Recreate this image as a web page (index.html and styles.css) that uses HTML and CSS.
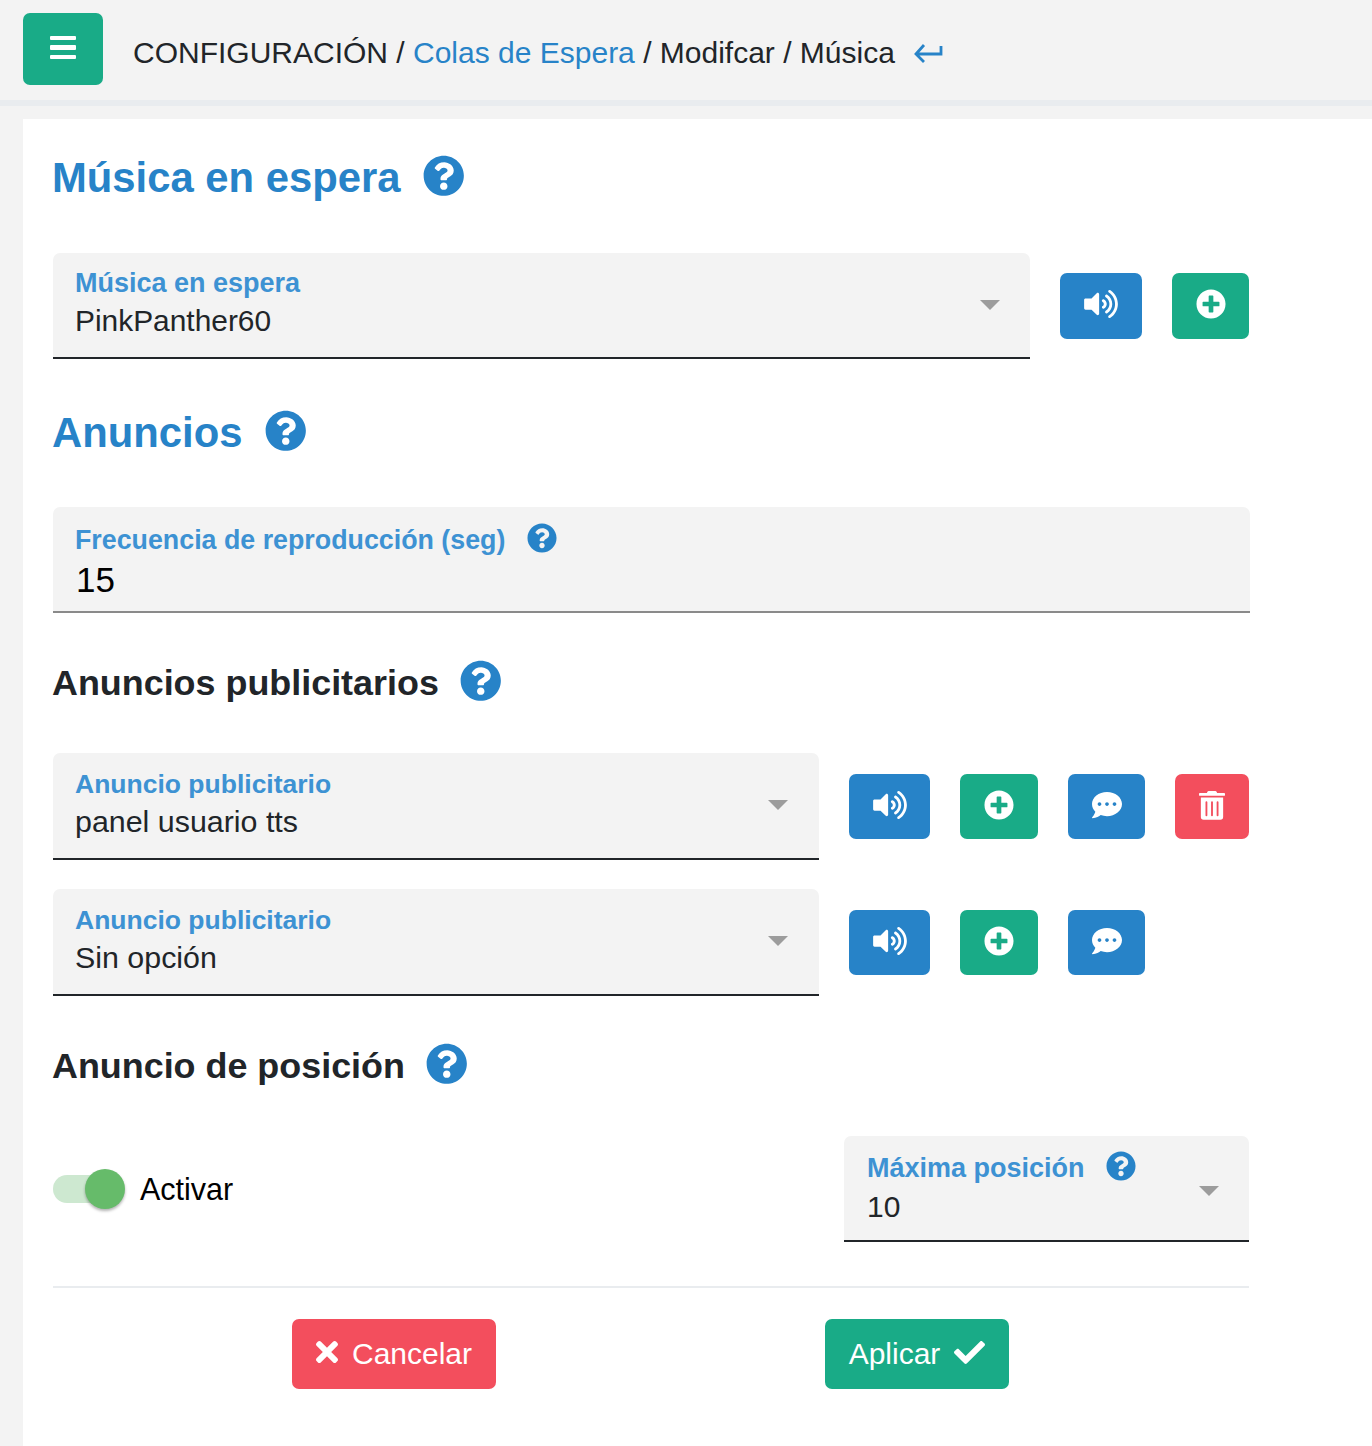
FILE: index.html
```html
<!DOCTYPE html>
<html lang="es">
<head>
<meta charset="utf-8">
<title>Música</title>
<link rel="stylesheet" href="styles.css">
</head>
<body>
<svg class="defs" width="0" height="0" aria-hidden="true">
  <symbol id="q" viewBox="0 0 512 512"><path d="M504 256c0 136.997-111.043 248-248 248S8 392.997 8 256C8 119.083 119.043 8 256 8s248 111.083 248 248zM262.655 90c-54.497 0-89.255 22.957-116.549 63.758-3.536 5.286-2.353 12.415 2.715 16.258l34.699 26.31c5.205 3.947 12.621 3.008 16.665-2.122 17.864-22.658 30.113-35.797 57.303-35.797 20.429 0 45.698 13.148 45.698 32.958 0 14.976-12.363 22.667-32.534 33.976C247.128 238.528 216 254.941 216 296v4c0 6.627 5.373 12 12 12h56c6.627 0 12-5.373 12-12v-1.333c0-28.462 83.186-29.647 83.186-106.667 0-58.002-60.165-102-116.531-102zM256 338c-25.365 0-46 20.635-46 46 0 25.364 20.635 46 46 46s46-20.636 46-46c0-25.365-20.635-46-46-46z"/></symbol>
  <symbol id="plus" viewBox="0 0 512 512"><path d="M256 8C119 8 8 119 8 256s111 248 248 248 248-111 248-248S393 8 256 8zm144 276c0 6.6-5.4 12-12 12h-92v92c0 6.6-5.4 12-12 12h-56c-6.6 0-12-5.4-12-12v-92h-92c-6.6 0-12-5.4-12-12v-56c0-6.6 5.4-12 12-12h92v-92c0-6.6 5.4-12 12-12h56c6.6 0 12 5.4 12 12v92h92c6.6 0 12 5.4 12 12v56z"/></symbol>
  <symbol id="vol" viewBox="0 0 576 512"><path d="M215.03 71.05L126.06 160H24c-13.26 0-24 10.74-24 24v144c0 13.25 10.74 24 24 24h102.06l88.97 88.95c15.03 15.03 40.97 4.47 40.97-16.97V88.02c0-21.46-25.96-31.98-40.97-16.97zm233.32-51.08c-11.17-7.33-26.18-4.24-33.51 6.95-7.34 11.17-4.22 26.18 6.95 33.51 66.27 43.49 105.82 116.6 105.82 195.58 0 78.98-39.55 152.09-105.82 195.58-11.17 7.32-14.29 22.34-6.95 33.5 7.04 10.71 21.93 14.56 33.51 6.95C528.27 439.58 576 351.33 576 256S528.27 72.43 448.35 19.97zM480 256c0-63.53-32.06-121.94-85.77-156.24-11.19-7.14-26.03-3.82-33.12 7.46s-3.78 26.21 7.41 33.36C408.27 165.97 432 209.11 432 256s-23.73 90.03-63.48 115.42c-11.19 7.14-14.5 22.07-7.41 33.36 6.51 10.36 21.12 15.14 33.12 7.46C447.94 377.94 480 319.54 480 256zm-141.77-76.87c-11.58-6.33-26.19-2.16-32.61 9.45-6.39 11.61-2.16 26.2 9.45 32.61C328.98 228.28 336 241.63 336 256c0 14.38-7.02 27.72-18.92 34.81-11.61 6.41-15.84 21-9.45 32.61 6.43 11.66 21.05 15.8 32.61 9.45 28.23-15.55 45.77-45 45.77-76.88s-17.54-61.32-45.78-76.86z"/></symbol>
  <symbol id="chat" viewBox="0 0 512 512"><path d="M256 32C114.6 32 0 125.1 0 240c0 49.6 21.4 95 57 130.7C44.5 421.1 2.7 466 2.2 466.5c-2.2 2.3-2.8 5.7-1.5 8.7S4.8 480 8 480c66.3 0 116-31.8 140.6-51.4 32.7 12.3 69 19.4 107.4 19.4 141.4 0 256-93.1 256-208S397.4 32 256 32zM128 272c-17.7 0-32-14.3-32-32s14.3-32 32-32 32 14.3 32 32-14.3 32-32 32zm128 0c-17.7 0-32-14.3-32-32s14.3-32 32-32 32 14.3 32 32-14.3 32-32 32zm128 0c-17.7 0-32-14.3-32-32s14.3-32 32-32 32 14.3 32 32-14.3 32-32 32z"/></symbol>
  <symbol id="trash" viewBox="0 0 448 512"><path d="M32 464a48 48 0 0 0 48 48h288a48 48 0 0 0 48-48V128H32zm272-256a16 16 0 0 1 32 0v224a16 16 0 0 1-32 0zm-96 0a16 16 0 0 1 32 0v224a16 16 0 0 1-32 0zm-96 0a16 16 0 0 1 32 0v224a16 16 0 0 1-32 0zM432 48H312l-9.4-18.7A24 24 0 0 0 281.1 16H166.8a23.72 23.72 0 0 0-21.4 13.3L136 48H16A16 16 0 0 0 0 64v24a8 8 0 0 0 8 8h432a8 8 0 0 0 8-8V64a16 16 0 0 0-16-16z"/></symbol>
  <symbol id="times" viewBox="0 0 352 512"><path d="M242.72 256l100.07-100.07c12.28-12.28 12.28-32.19 0-44.48l-22.24-22.24c-12.28-12.28-32.19-12.28-44.48 0L176 189.28 75.93 89.21c-12.28-12.28-32.19-12.28-44.48 0L9.21 111.45c-12.28 12.28-12.28 32.19 0 44.48L109.28 256 9.21 356.07c-12.28 12.28-12.28 32.19 0 44.48l22.24 22.24c12.28 12.28 32.2 12.28 44.48 0L176 322.72l100.07 100.07c12.28 12.28 32.2 12.28 44.48 0l22.24-22.24c12.28-12.28 12.28-32.19 0-44.48L242.72 256z"/></symbol>
  <symbol id="check" viewBox="0 0 512 512"><path d="M173.898 439.404l-166.4-166.4c-9.997-9.997-9.997-26.206 0-36.204l36.203-36.204c9.997-9.998 26.207-9.998 36.204 0L192 312.69 432.095 72.596c9.997-9.997 26.207-9.997 36.204 0l36.203 36.204c9.997 9.997 9.997 26.206 0 36.204l-294.4 294.401c-9.998 9.997-26.207 9.997-36.204-.001z"/></symbol>
</svg>

<header class="topbar">
  <button class="menu-btn" aria-label="menu"><span></span><span></span><span></span></button>
  <nav class="crumbs">CONFIGURACIÓN / <a class="link">Colas de Espera</a> / Modifcar / Música
    <svg class="back" viewBox="0 0 30 22"><path d="M28 5v8H3M11 4l-8 9 8 8" fill="none" stroke="currentColor" stroke-width="2.8"/></svg>
  </nav>
</header>

<main class="card">
  <h2 class="title blue t1">Música en espera <svg class="q q-lg"><use href="#q"/></svg></h2>
  <div class="row r1">
    <div class="field w977"><label>Música en espera</label><div class="val">PinkPanther60</div><i class="caret"></i></div>
    <div class="btns">
      <button class="ib blue-bg w82"><svg class="i-vol"><use href="#vol"/></svg></button>
      <button class="ib green-bg w77"><svg class="i-plus"><use href="#plus"/></svg></button>
    </div>
  </div>

  <h2 class="title blue t2">Anuncios <svg class="q q-lg"><use href="#q"/></svg></h2>
  <div class="field input"><label>Frecuencia de reproducción (seg) <svg class="q q-sm"><use href="#q"/></svg></label><div class="val big">15</div></div>

  <h3 class="title sub t3">Anuncios publicitarios <svg class="q q-lg"><use href="#q"/></svg></h3>
  <div class="row r3">
    <div class="field w766"><label>Anuncio publicitario</label><div class="val">panel usuario tts</div><i class="caret"></i></div>
    <div class="btns">
      <button class="ib blue-bg w81"><svg class="i-vol"><use href="#vol"/></svg></button>
      <button class="ib green-bg w78"><svg class="i-plus"><use href="#plus"/></svg></button>
      <button class="ib blue-bg w77"><svg class="i-chat"><use href="#chat"/></svg></button>
      <button class="ib red-bg w74"><svg class="i-trash"><use href="#trash"/></svg></button>
    </div>
  </div>
  <div class="row r4">
    <div class="field w766"><label>Anuncio publicitario</label><div class="val">Sin opción</div><i class="caret"></i></div>
    <div class="btns">
      <button class="ib blue-bg w81"><svg class="i-vol"><use href="#vol"/></svg></button>
      <button class="ib green-bg w78"><svg class="i-plus"><use href="#plus"/></svg></button>
      <button class="ib blue-bg w77"><svg class="i-chat"><use href="#chat"/></svg></button>
    </div>
  </div>

  <h3 class="title sub t5">Anuncio de posición <svg class="q q-lg"><use href="#q"/></svg></h3>
  <div class="row r5">
    <div class="toggle"><span class="track"><span class="knob"></span></span><span class="tlabel">Activar</span></div>
    <div class="field w405"><label>Máxima posición <svg class="q q-sm"><use href="#q"/></svg></label><div class="val">10</div><i class="caret"></i></div>
  </div>

  <hr class="sep">
  <div class="actions">
    <button class="act red-bg cancel"><svg class="i-x"><use href="#times"/></svg>Cancelar</button>
    <button class="act green-bg apply">Aplicar<svg class="i-check"><use href="#check"/></svg></button>
  </div>
</main>
</body>
</html>
```
FILE: styles.css
```css
* { box-sizing: border-box; }
html, body { margin: 0; padding: 0; }
body {
  background: #f3f3f3;
  font-family: "Liberation Sans", Arial, sans-serif;
  color: #212529;
  height: 1446px;
  overflow: hidden;
}
.defs { position: absolute; }
button { border: 0; padding: 0; font-family: inherit; }
svg { fill: currentColor; }

.topbar {
  height: 106px;
  border-bottom: 6px solid #e9ecef;
  display: flex;
  align-items: flex-start;
  padding: 13px 0 0 23px;
}
.menu-btn {
  width: 80px;
  height: 72px;
  border-radius: 7px;
  background: #19ab87;
  display: flex;
  flex-direction: column;
  align-items: center;
  justify-content: center;
  gap: 5px;
  padding-bottom: 3px;
}
.menu-btn span { width: 26px; height: 4.5px; background: #fff; border-radius: 1px; }
.crumbs {
  margin-left: 30px;
  font-size: 30px;
  line-height: 34px;
  padding-top: 23px;
  color: #212529;
  white-space: nowrap;
  display: block;
}
.link { color: #2783c8; }
.back { width: 30px; height: 22px; color: #2783c8; margin-left: 10px; vertical-align: 0; }

.card {
  background: #fff;
  margin: 13px 0 0 23px;
  height: 1327px;
  padding: 35px 30px 0;
  width: 1349px;
}
.title { margin: 0 0 0 -1px; display: flex; align-items: center; font-weight: 700; white-space: nowrap; }
.blue { color: #2783c8; font-size: 41.8px; }
.sub { color: #212529; font-size: 35.9px; }
.title .q { margin-left: 21px; margin-top: -4px; }
.blue .q { margin-left: 22.5px; }
.q { color: #2783c8; display: inline-block; }
.q-lg { width: 41.5px; height: 41.5px; }
.q-sm { width: 30px; height: 30px; margin-left: 14px; vertical-align: -4px; }
.t1 { height: 48px; }
.t2 { height: 48px; margin-top: 50px; margin-bottom: 50px; }
.t3 { height: 42px; margin-top: 49px; }
.t5 { height: 42px; margin-top: 49px; }

.row { display: flex; }
.r1 { margin-top: 51px; }
.r3 { margin-top: 49px; }
.r4 { margin-top: 29px; }
.r5 { margin-top: 49px; justify-content: space-between; width: 1196px; align-items: center; }

.field {
  position: relative;
  height: 106px;
  background: #f3f3f3;
  border-radius: 7px 7px 0 0;
  border-bottom: 2px solid #212529;
  padding: 12px 22px 0;
  flex: none;
}
.field label { display: block; color: #3d92d3; font-size: 27px; font-weight: 700; line-height: 36px; white-space: nowrap; }
.val { font-size: 30px; line-height: 37px; color: #212529; }
.val.big { font-size: 35px; line-height: 42px; color: #000; margin-top: 1px; padding-left: 1px; }
.w977 { width: 977px; }
.w977 .val { font-size: 29.9px; margin-top: 1px; }
.w766 { width: 766px; height: 107px; padding-top: 13px; }
.w766 label { font-size: 26.5px; }
.w766 .val { font-size: 30.4px; margin-top: 1px; }
.w766 .caret { right: 31px; }
.w405 { width: 405px; padding: 14px 23px 0; height: 106px; }
.w405 .val { margin-top: 2px; }
.w405 .caret { top: 50px; }
.input { width: 1197px; border-bottom: 2px solid #8a8a8a; padding-top: 15px; }
.input label { font-size: 26.8px; }
.caret {
  position: absolute;
  right: 30px;
  top: 47px;
  border-left: 10px solid transparent;
  border-right: 10px solid transparent;
  border-top: 10px solid #9c9c9c;
}

.btns { display: flex; gap: 30px; margin-left: 30px; align-items: center; }
.ib { height: 65px; border-radius: 7px; color: #fff; display: flex; align-items: center; justify-content: center; }
.ib svg { margin-bottom: 4px; }
.blue-bg { background: #2783c8; }
.green-bg { background: #19ab87; }
.red-bg { background: #f34e5d; }
.w82 { width: 82px; height: 66px; }
.r1 .w77 { height: 66px; }
.w81 { width: 81px; }
.w78 { width: 78px; }
.w77 { width: 77px; }
.w74 { width: 74px; }
.i-vol { width: 34px; height: 30px; }
.i-plus { width: 30px; height: 30px; }
.i-chat { width: 30px; height: 30px; }
.i-trash { width: 26px; height: 30px; }

.toggle { display: flex; align-items: center; }
.track { position: relative; display: block; width: 68px; height: 28px; border-radius: 14px; background: #cde8d0; }
.knob {
  position: absolute;
  left: 32px;
  top: -6px;
  width: 40px;
  height: 40px;
  border-radius: 50%;
  background: #66bb6a;
  box-shadow: 0 2px 3px rgba(0,0,0,.3);
}
.tlabel { font-size: 30.5px; color: #000; margin-left: 19px; }

.sep { margin: 44px 0 0; border: 0; border-top: 2px solid #e9ecef; width: 1196px; height: 0; }
.actions { display: flex; margin: 31px 0 0 239px; gap: 329px; }
.act {
  height: 70px;
  border-radius: 7px;
  color: #fff;
  font-size: 30px;
  display: flex;
  align-items: center;
  justify-content: center;
}
.cancel { width: 204px; }
.apply { width: 184px; }
.i-x { width: 22px; height: 32px; margin-right: 14px; margin-top: -4px; }
.i-check { width: 31px; height: 31px; margin-left: 14px; margin-top: -4px; }
```
